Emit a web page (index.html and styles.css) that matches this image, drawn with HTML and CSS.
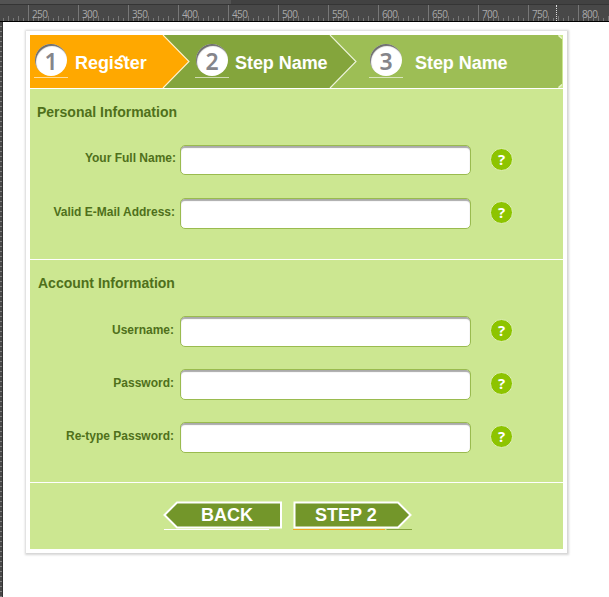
FILE: index.html
```html
<!DOCTYPE html>
<html lang="en">
<head>
<meta charset="utf-8">
<title>Register</title>
<link rel="stylesheet" href="styles.css">
</head>
<body>
<div class="topbar"><div class="tab"></div></div>
<div class="ruler">
  <span>250</span><span>300</span><span>350</span><span>400</span><span>450</span><span>500</span><span>550</span><span>600</span><span>650</span><span>700</span><span>750</span><span>800</span>
  <i class="cursor-mark"></i>
</div>
<div class="workspace">
  <div class="side-ruler"></div>
  <main class="card">
    <header class="steps">
      <svg class="steps-bg" width="533" height="54" viewBox="0 0 533 54">
        <rect width="533" height="53" fill="#cce791"/>
        <path d="M300 0H528L532 4V49L528 53H300Z" fill="#9dbe55"/>
        <path d="M528.500 0.500L532 3.500M532 49.500L528.500 52.500" stroke="#e8f3cd" stroke-width="1.500"/>
        <path d="M130 0H300L326 26.500L300 53H130Z" fill="#84a53c"/>
        <path d="M300 0L326 26.500L300 53" fill="none" stroke="#eef5dc" stroke-width="1.100"/>
        <path d="M0 0H133L159 26.500L133 53H0Z" fill="#ffa800"/>
        <path d="M133 0L159 26.500L133 53" fill="none" stroke="#fff3cf" stroke-width="1.100"/>
        <rect y="53" width="533" height="1" fill="#fff"/>
      </svg>
      <div class="step one"><b class="num">1</b><span>Register</span>
        <svg class="lig" width="10" height="8" viewBox="0 0 10 8"><path d="M2 5.500C3 1 7.500 1 8 6" fill="none" stroke="#fff" stroke-width="1.800"/></svg>
      </div>
      <div class="step two"><b class="num">2</b><span>Step Name</span></div>
      <div class="step three"><b class="num">3</b><span>Step Name</span></div>
    </header>
    <section class="personal">
      <h2>Personal Information</h2>
      <div class="row"><label>Your Full Name:</label><div class="field"></div><b class="help">?</b></div>
      <div class="row"><label>Valid E-Mail Address:</label><div class="field"></div><b class="help">?</b></div>
    </section>
    <section class="account">
      <h2>Account Information</h2>
      <div class="row"><label>Username:</label><div class="field"></div><b class="help">?</b></div>
      <div class="row"><label>Password:</label><div class="field"></div><b class="help">?</b></div>
      <div class="row"><label>Re-type Password:</label><div class="field"></div><b class="help">?</b></div>
    </section>
    <footer class="actions">
      <div class="btn back">
        <svg width="120" height="30" viewBox="0 0 120 30"><path d="M1.500 14L14 1.500H118V26.500H14Z" fill="#73962a" stroke="#fff" stroke-width="2"/><path d="M1 28.500H106" stroke="#fff"/></svg>
        <span>BACK</span>
      </div>
      <div class="btn next">
        <svg width="120" height="30" viewBox="0 0 120 30"><path d="M1.500 1.500H105L117.500 14L105 26.500H1.500Z" fill="#73962a" stroke="#fff" stroke-width="2"/><path d="M0 28.500H92" stroke="#f5a623"/><path d="M93.500 28.500H119" stroke="#84a53c"/></svg>
        <span>STEP 2</span>
      </div>
    </footer>
  </main>
</div>
</body>
</html>
```
FILE: styles.css
```css
* { box-sizing: border-box; }
body { margin: 0; width: 609px; height: 597px; overflow: hidden; background: #fff; font-family: "Liberation Sans", Arial, sans-serif; }
.topbar { height: 5px; background: #424242; border-bottom: 1px solid #353535; }
.tab { width: 231px; height: 4px; background: #535353; }
.ruler {
  position: relative; display: flex; width: 609px; height: 17px; padding-left: 28px; overflow: hidden;
  border-bottom: 1px solid #000; background-color: #484848;
  background-image: repeating-linear-gradient(90deg, #777 0 1px, transparent 1px 10px), repeating-linear-gradient(90deg, #777 0 1px, transparent 1px 5px);
  background-size: 620px 5px, 620px 3px; background-position: 8px 11px, 3px 13px; background-repeat: repeat-x;
}
.ruler span { flex: 0 0 50px; height: 16px; padding-left: 3px; border-left: 1px solid #777; color: #aaa; font: 10px/19px "Open Sans", sans-serif; letter-spacing: -0.6px; }
.cursor-mark { position: absolute; left: 556px; top: 0; height: 16px; border-left: 1px dotted #ddd; }
.workspace { display: flex; align-items: flex-start; height: 575px; }
.side-ruler { flex: 0 0 3px; height: 575px; border-right: 1px solid #333; background: repeating-linear-gradient(#484848 0 4px, #808080 4px 5px); }
.card { width: 541px; height: 522px; margin: 9px 0 0 23px; padding: 4px; background: #fff; box-shadow: 0 0 2px 1.5px #d6d6d6; }
.steps { position: relative; display: flex; height: 54px; }
.steps-bg { position: absolute; left: 0; top: 0; }
.step { position: relative; display: flex; height: 43px; align-items: flex-start; padding-top: 9px; color: #fff; font-weight: bold; font-size: 18px; line-height: 20px; }
.one { width: 160px; padding-left: 4px; }
.two { width: 175px; padding-left: 5px; }
.three { padding-left: 4px; }
.num { position: relative; z-index: 0; flex: none; width: 34px; height: 34px; text-align: center; border-bottom: 1px solid #fff9; color: #85858a; font: 600 23px/35px "Noto Sans", sans-serif; }
.num::before { content: ""; position: absolute; z-index: -1; left: 1px; top: 0; width: 32px; height: 32px; border-radius: 50%; background: #fff; box-shadow: inset 1px 2px 1px #555d; }
.step span { margin: 9px 0 0 7px; letter-spacing: -0.05px; }
.two span { margin-left: 6px; }
.three span { margin-left: 12px; }
.lig { position: absolute; left: 87px; top: 19px; }
section { background: #cce791; border-bottom: 1px solid #fff; color: #4f701b; }
.personal { height: 171px; padding: 13px 0 0 7px; }
.account { height: 223px; padding: 13px 0 0 7px; }
h2 { margin: 0; font-size: 14px; line-height: 20px; }
.personal h2 { margin-bottom: 23px; }
.account h2 { margin-bottom: 23px; margin-left: 1px; }
.row { display: flex; height: 31px; margin-bottom: 22px; align-items: flex-start; }
label { width: 139px; padding: 4px 1px 0 0; text-align: right; white-space: nowrap; font-weight: bold; font-size: 12px; line-height: 20px; }
.personal label { padding: 3px 0 0; }
.account label { padding-right: 2px; }
.personal .row + .row label { padding-top: 4px; padding-right: 1px; }
.field { width: 291px; height: 31px; margin-left: 4px; border: 1px solid #9abb4f; border-radius: 5px; background: #fff; box-shadow: inset 0 2px 1px #aaa; }
.personal h2 + .row .field { height: 30px; }
.help { width: 23px; height: 23px; margin: 3px 0 0 19px; border-radius: 50%; border: 1px solid #dff0b8; background: #8dc400; color: #fff; text-align: center; font: bold 15px/21px "Open Sans", sans-serif; }
.actions { display: flex; height: 66px; padding: 18px 0 0 133px; gap: 10px; background: #cce791; }
.btn { position: relative; width: 120px; height: 30px; color: #fff; font-weight: bold; font-size: 18px; }
.btn svg { display: block; }
.btn span { position: absolute; top: 4px; line-height: 20px; white-space: nowrap; }
.back span { left: 38px; }
.next span { left: 22px; }
```
